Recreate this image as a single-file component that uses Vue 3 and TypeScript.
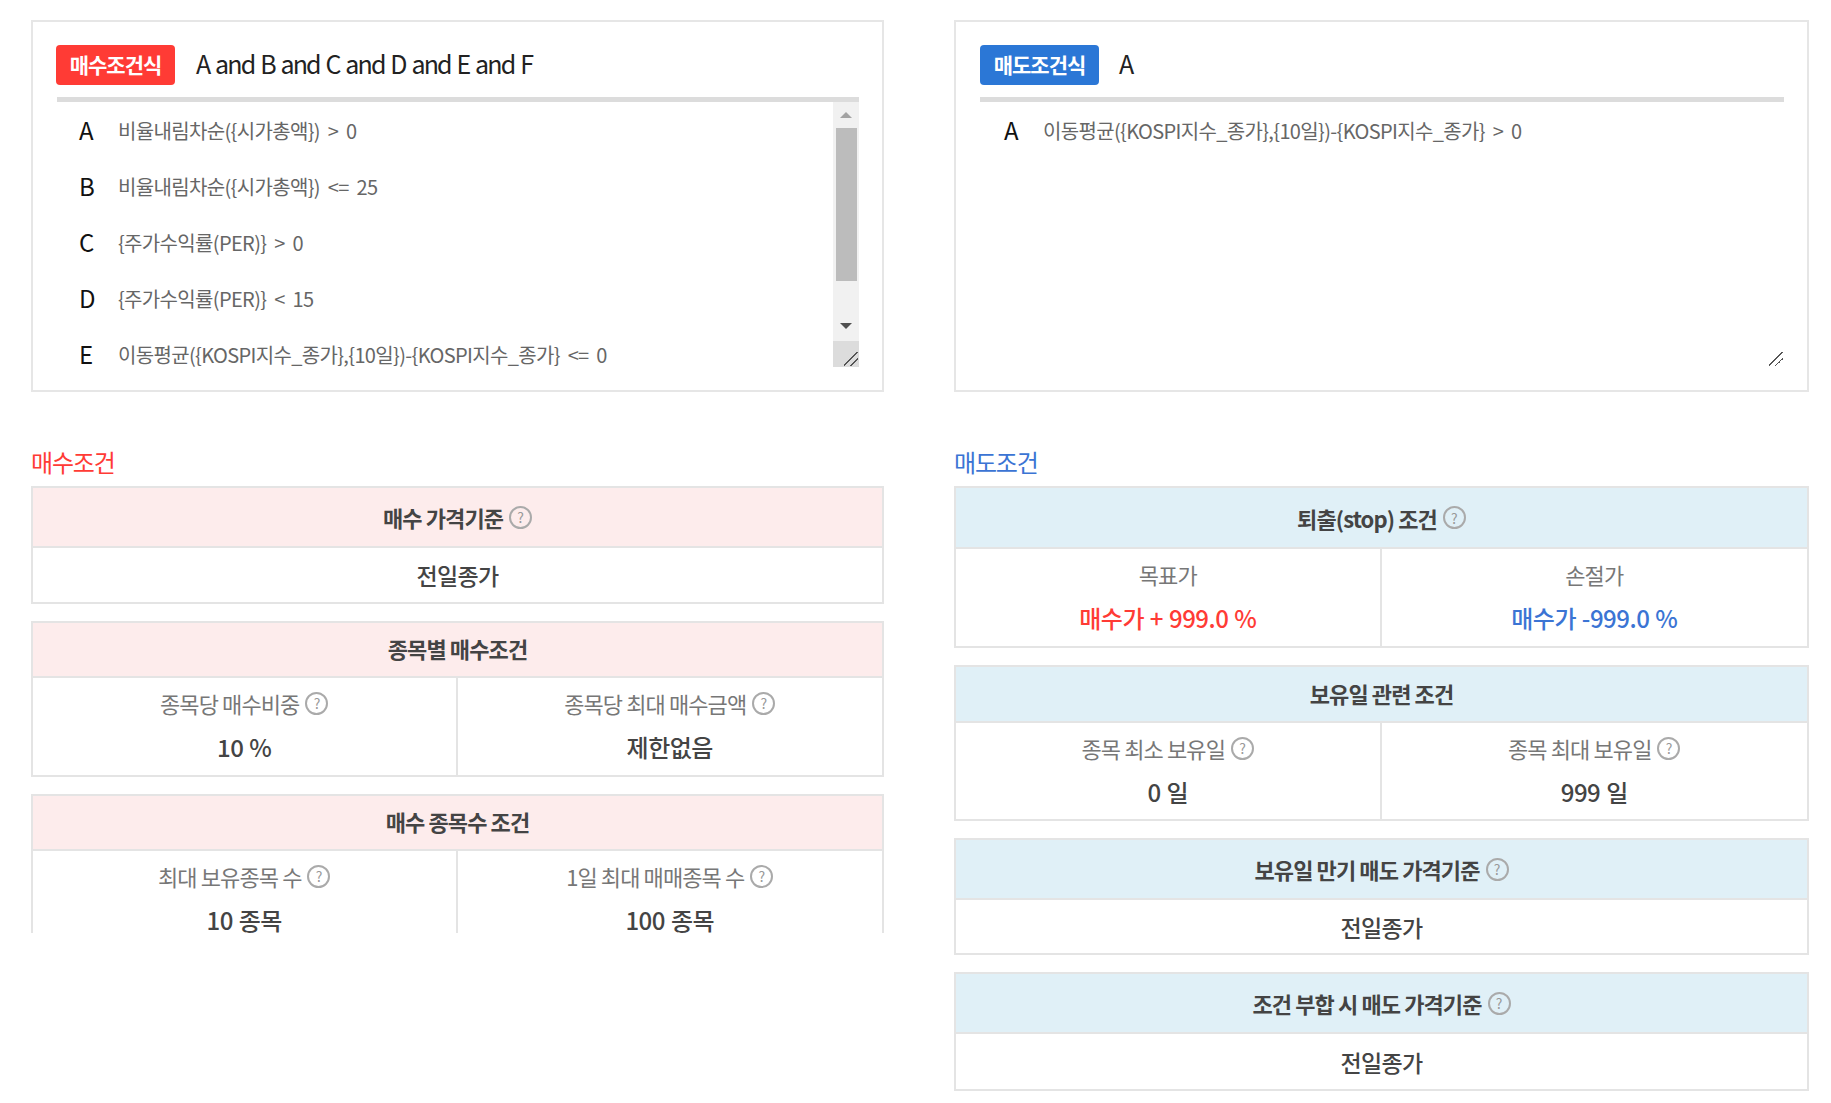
<script setup lang="ts">
interface Cell {
  label: string;
  help?: boolean;
  value: string;
  tone?: string;
}
interface Block {
  title: string;
  help?: boolean;
  value?: string;
  cells?: Cell[];
  head: number;
  body: number;
}

const buyRows = [
  { key: "A", text: "비율내림차순({시가총액}) > 0" },
  { key: "B", text: "비율내림차순({시가총액}) <= 25" },
  { key: "C", text: "{주가수익률(PER)} > 0" },
  { key: "D", text: "{주가수익률(PER)} < 15" },
  { key: "E", text: "이동평균({KOSPI지수_종가},{10일})-{KOSPI지수_종가} <= 0" },
];
const sellRows = [
  { key: "A", text: "이동평균({KOSPI지수_종가},{10일})-{KOSPI지수_종가} > 0" },
];

const buyBlocks: Block[] = [
  { title: "매수 가격기준", help: true, value: "전일종가", head: 60, body: 54 },
  {
    title: "종목별 매수조건",
    head: 55,
    body: 97,
    cells: [
      { label: "종목당 매수비중", help: true, value: "10 %" },
      { label: "종목당 최대 매수금액", help: true, value: "제한없음" },
    ],
  },
  {
    title: "매수 종목수 조건",
    head: 55,
    body: 98,
    cells: [
      { label: "최대 보유종목 수", help: true, value: "10 종목" },
      { label: "1일 최대 매매종목 수", help: true, value: "100 종목" },
    ],
  },
];
const sellBlocks: Block[] = [
  {
    title: "퇴출(stop) 조건",
    help: true,
    head: 61,
    body: 97,
    cells: [
      { label: "목표가", value: "매수가 + 999.0 %", tone: "red" },
      { label: "손절가", value: "매수가 -999.0 %", tone: "blue" },
    ],
  },
  {
    title: "보유일 관련 조건",
    head: 56,
    body: 96,
    cells: [
      { label: "종목 최소 보유일", help: true, value: "0 일" },
      { label: "종목 최대 보유일", help: true, value: "999 일" },
    ],
  },
  { title: "보유일 만기 매도 가격기준", help: true, value: "전일종가", head: 60, body: 53 },
  { title: "조건 부합 시 매도 가격기준", help: true, value: "전일종가", head: 60, body: 55 },
];

const columns = [
  { side: "buy", badge: "매수조건식", formula: "A and B and C and D and E and F", rows: buyRows, title: "매수조건", blocks: buyBlocks },
  { side: "sell", badge: "매도조건식", formula: "A", rows: sellRows, title: "매도조건", blocks: sellBlocks },
];
</script>

<template>
  <div class="page">
    <section v-for="col in columns" :key="col.side" class="col" :class="col.side">
      <div class="formula">
        <div class="formula__head">
          <span class="badge">{{ col.badge }}</span>
          <span class="formula__text">{{ col.formula }}</span>
        </div>
        <div class="formula__box">
          <ul class="formula__list">
            <li v-for="row in col.rows" :key="row.key" class="formula__row">
              <b>{{ row.key }}</b>
              <span>{{ row.text }}</span>
            </li>
          </ul>
          <div v-if="col.side === 'buy'" class="scroll">
            <div class="scroll__track">
              <i class="arrow arrow--up"></i>
              <div class="scroll__thumb"></div>
              <i class="arrow arrow--down"></i>
            </div>
            <div class="scroll__corner"><i class="grip"></i></div>
          </div>
          <i v-else class="grip"></i>
        </div>
      </div>

      <h2 class="title">{{ col.title }}</h2>
      <div class="blocks">
        <div v-for="block in col.blocks" :key="block.title" class="block">
          <div
            class="block__head"
            :class="{ 'block__head--plain': !block.help }"
            :style="{ height: block.head + 'px' }"
          >
            {{ block.title }}
            <span v-if="block.help" class="help">?</span>
          </div>
          <div v-if="block.value" class="block__value" :style="{ height: block.body + 'px' }">
            {{ block.value }}
          </div>
          <div v-else class="block__cells" :style="{ height: block.body + 'px' }">
            <div v-for="cell in block.cells" :key="cell.label" class="cell">
              <div class="cell__label">
                {{ cell.label }}
                <span v-if="cell.help" class="help">?</span>
              </div>
              <div class="cell__value" :class="cell.tone">{{ cell.value }}</div>
            </div>
          </div>
        </div>
      </div>
    </section>
  </div>
</template>

<style>
html,
body {
  background: #fff;
}
</style>

<style scoped>
.page {
  display: grid;
  grid-template-columns: 853px 855px;
  column-gap: 70px;
  padding: 20px 0 0 31px;
  font-family: "Noto Sans CJK KR", "Noto Sans", sans-serif;
  color: #333;
}

.formula {
  height: 372px;
  box-sizing: border-box;
  border: 2px solid #e6e6e6;
  padding: 23px 23px 0 24px;
}
.formula__head {
  display: flex;
  align-items: center;
  gap: 21px;
  height: 40px;
}
.badge {
  width: 119px;
  height: 40px;
  line-height: 38px;
  border-radius: 4px;
  text-align: center;
  color: #fff;
  font-size: 21px;
  font-weight: 700;
  letter-spacing: -1px;
}
.buy .badge {
  background: #ff3b35;
  margin-left: -1px;
}
.sell .badge {
  background: #2b77d6;
  margin-right: -1px;
}
.formula__text {
  margin-bottom: 4px;
  font-size: 25px;
  letter-spacing: -1.85px;
  word-spacing: 2px;
  color: #222;
}
.formula__box {
  position: relative;
  display: flex;
  height: 265px;
  margin-top: 12px;
  border-top: 5px solid #dcdcdc;
}
.formula__list {
  flex: 1;
  margin: 0;
  padding: 0 0 0 24px;
  list-style: none;
  overflow: hidden;
}
.buy .formula__list {
  padding-left: 22px;
}
.formula__row {
  display: flex;
  align-items: center;
  height: 56px;
  font-size: 20px;
  letter-spacing: -0.65px;
  word-spacing: 4px;
  color: #666;
}
.formula__row b {
  width: 39px;
  margin-bottom: 2px;
  font-weight: 400;
  font-size: 24px;
  color: #111;
}

.scroll {
  display: flex;
  flex-direction: column;
  width: 26px;
}
.scroll__track {
  flex: 1;
  display: flex;
  flex-direction: column;
  align-items: center;
  background: #f1f1f1;
}
.scroll__thumb {
  width: 21px;
  height: 153px;
  margin-top: 10px;
  background: #bcbcbc;
}
.arrow {
  width: 0;
  height: 0;
  border-left: 6px solid transparent;
  border-right: 6px solid transparent;
}
.arrow--up {
  margin-top: 10px;
  border-bottom: 6px solid #a3a3a3;
}
.arrow--down {
  margin-top: auto;
  margin-bottom: 12px;
  border-top: 6px solid #505050;
}
.scroll__corner {
  position: relative;
  height: 26px;
  background: #dcdcdc;
}
.grip {
  position: absolute;
  right: 1px;
  bottom: 1px;
  width: 14px;
  height: 14px;
  background: linear-gradient(
    135deg,
    transparent 46%,
    #555 46%,
    #555 53%,
    transparent 53%,
    transparent 68%,
    #555 68%,
    #555 75%,
    transparent 75%
  );
}

.title {
  margin: 56px 0 0;
  height: 38px;
  line-height: 27px;
  font-size: 24px;
  font-weight: 400;
  letter-spacing: -1.2px;
}
.buy .title {
  color: #ff3b35;
}
.sell .title {
  color: #3b74d4;
}

.blocks {
  display: flex;
  flex-direction: column;
  gap: 17px;
}
.buy .blocks {
  height: 447px;
  overflow: hidden;
}
.block {
  border: 2px solid #e4e4e4;
  box-sizing: border-box;
}
.block__head {
  display: flex;
  align-items: center;
  justify-content: center;
  gap: 6px;
  box-sizing: border-box;
  border-bottom: 2px solid #e4e4e4;
  font-size: 22px;
  font-weight: 700;
  letter-spacing: -0.9px;
  color: #444;
}
.block__head--plain {
  padding-bottom: 3px;
}
.buy .block__head {
  background: #fdecec;
}
.sell .block__head {
  background: #e0f0f7;
}
.block__value {
  display: flex;
  align-items: center;
  justify-content: center;
  box-sizing: border-box;
  font-size: 23px;
  font-weight: 500;
  letter-spacing: -0.7px;
  color: #444;
}
.block__cells {
  display: grid;
  grid-template-columns: 1fr 1fr;
  box-sizing: border-box;
}
.cell {
  text-align: center;
  padding-top: 10px;
}
.cell:first-child {
  border-right: 2px solid #e4e4e4;
}
.cell__label {
  display: flex;
  align-items: center;
  justify-content: center;
  gap: 6px;
  height: 30px;
  font-size: 22px;
  letter-spacing: -0.9px;
  color: #777;
}
.cell__value {
  margin-top: 14px;
  line-height: 30px;
  font-size: 24px;
  font-weight: 500;
  letter-spacing: -0.5px;
  word-spacing: 1px;
  color: #444;
}
.cell__value.red {
  color: #ff3b35;
}
.cell__value.blue {
  color: #3b74d4;
}
.help {
  display: inline-flex;
  align-items: center;
  justify-content: center;
  width: 23px;
  height: 23px;
  box-sizing: border-box;
  border: 2px solid #aaa;
  border-radius: 50%;
  font-size: 14px;
  font-weight: 400;
  letter-spacing: 0;
  color: #999;
}
</style>
